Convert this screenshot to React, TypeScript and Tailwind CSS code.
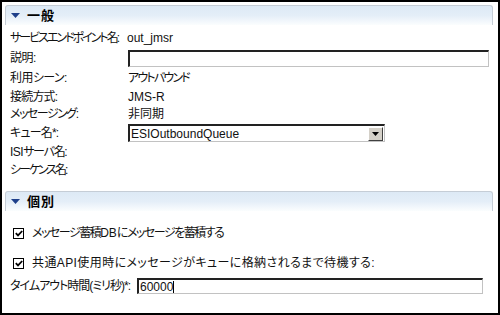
import React from 'react';

// Classic Windows-like property sheet: section headers + label/value rows

const FONT = { fontFamily: '"Liberation Sans", "Noto Sans CJK JP", sans-serif', fontFeatureSettings: '"palt"' };

function SectionHeader({ title }: { title: string }) {
  return (
    <div className="h-[20px] flex items-center rounded-t-[3px] border border-b-0 border-[#c5cdd6] bg-gradient-to-b from-[#dde9f5] via-[#e4eef8] to-[#fbfdfe]">
      <svg width="9" height="6" viewBox="0 0 9 6" className="ml-[5px] mr-[7px]">
        <path d="M0 0 H9 L4.5 5 Z" fill="#1e3f8a" />
      </svg>
      <span className="text-[13px] font-bold text-black leading-none tracking-[1px]">{title}</span>
    </div>
  );
}

function Row({
  label,
  children,
  h,
  mt = '',
}: {
  label: React.ReactNode;
  children?: React.ReactNode;
  h: string;
  mt?: string;
}) {
  return (
    <div className={`flex items-center pl-[5px] ${h} ${mt}`}>
      <div className="w-[118px] shrink-0 whitespace-nowrap">{label}</div>
      {children}
    </div>
  );
}

function Inset({ className, children }: { className: string; children?: React.ReactNode }) {
  return (
    <div
      className={`flex items-center bg-white border-t-2 border-l-2 border-b border-r border-t-[#222] border-l-[#222] border-b-[#c2c2c2] border-r-[#c2c2c2] ${className}`}
    >
      {children}
    </div>
  );
}

function CheckBox() {
  return (
    <div className="w-[11px] h-[11px] border-[1.5px] border-black bg-white flex items-center justify-center shrink-0">
      <svg width="8" height="7" viewBox="0 0 8 7">
        <path d="M0.8 3.2 L3 5.4 L7.2 1" stroke="#000" strokeWidth="1.8" fill="none" />
      </svg>
    </div>
  );
}

export default function App() {
  return (
    <div
      className="w-[500px] h-[315px] border-2 border-black bg-white pl-[3px] pr-[5px] pt-[3px] text-[12px] text-[#111] leading-none"
      style={FONT}
    >
      {/* 一般 */}
      <SectionHeader title="一般" />
      <Row label={<span className="tracking-[-2px]">サービスエンドポイント名:</span>} h="h-[18px]" mt="mt-[4px]">
        <span className="-ml-px">out_jmsr</span>
      </Row>
      <Row label={<span className="tracking-[-0.5px]">説明:</span>} h="h-[20px]" mt="mt-[1px]">
        <Inset className="flex-1 h-[17px] mr-[4px]" />
      </Row>
      <Row label={<span className="tracking-[-0.6px]">利用シーン:</span>} h="h-[18px]" mt="mt-[1px]">
        <span className="tracking-[-1.8px]">アウトバウンド</span>
      </Row>
      <Row label={<span className="tracking-[-0.8px]">接続方式:</span>} h="h-[18px]" mt="mt-[1px]">
        <span>JMS-R</span>
      </Row>
      <Row label={<span className="tracking-[-1.5px]">メッセージング:</span>} h="h-[16px]">
        <span>非同期</span>
      </Row>
      <Row label={<span className="tracking-[-0.8px]">キュー名*:</span>} h="h-[20px]" mt="mt-[1px]">
        <Inset className="w-[257px] h-[18px] justify-between">
          <span className="pl-[1px]">ESIOutboundQueue</span>
          <div className="w-[15px] h-[14px] mr-[1px] bg-[#d4d0c8] border border-t-white border-l-white border-b-[#404040] border-r-[#404040] flex items-center justify-center">
            <svg width="7" height="4" viewBox="0 0 7 4">
              <path d="M0 0 H7 L3.5 4 Z" fill="#000" />
            </svg>
          </div>
        </Inset>
      </Row>
      <Row
        label={
          <span>
            <span className="tracking-[-0.5px]">ISI</span>
            <span className="tracking-[-1.3px]">サーバ名:</span>
          </span>
        }
        h="h-[18px]"
      />
      <Row label={<span className="tracking-[-2px]">シーケンス名:</span>} h="h-[18px]" />

      {/* 個別 */}
      <div className="mt-[12px]">
        <SectionHeader title="個別" />
      </div>
      <div className="flex items-center h-[18px] mt-[13px] pl-[8px] gap-[8px]">
        <CheckBox />
        <span className="tracking-[-1.5px]">
          メッセージ蓄積<span className="tracking-normal">DB</span>にメッセージを蓄積する
        </span>
      </div>
      <div className="flex items-center h-[18px] mt-[12px] pl-[8px] gap-[8px]">
        <CheckBox />
        <span className="tracking-[0.4px]">共通API使用時にメッセージがキューに格納されるまで待機する:</span>
      </div>
      <div className="flex items-center h-[18px] mt-[5px] pl-[5px]">
        <span className="w-[127px] shrink-0 whitespace-nowrap tracking-[-1px]">タイムアウト時間(ミリ秒)*:</span>
        <Inset className="flex-1 h-[16px] mr-[10px]">
          <span className="pl-[1px]">60000</span>
          <span className="w-px h-[12px] bg-black" />
        </Inset>
      </div>
    </div>
  );
}
